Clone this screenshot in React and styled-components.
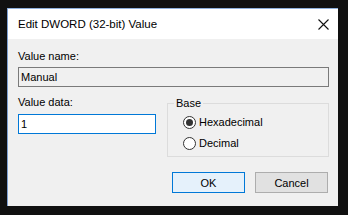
import React from 'react';
import styled, { createGlobalStyle } from 'styled-components';

const Global = createGlobalStyle`
  html, body {
    margin: 0;
    padding: 0;
    background: #101010;
  }
  body {
    font-family: "Liberation Sans", Arial, sans-serif;
    font-size: 11px;
    color: #000;
  }
`;

const Screen = styled.div`
  width: 348px;
  height: 215px;
  padding: 8px 0 0 7px;
  box-sizing: border-box;
`;

const Dialog = styled.div`
  width: 331px;
  height: 198px;
  box-sizing: border-box;
  border-top: 1px solid #8fb0dc;
  border-left: 1px solid #7d9fd2;
  display: flex;
  flex-direction: column;
  background: #f0f0f0;
`;

const TitleBar = styled.div`
  height: 30px;
  background: #fff;
  display: flex;
  align-items: center;
  justify-content: space-between;
  padding: 0 9px 0 10px;
  font-size: 11.5px;
`;

const Body = styled.div`
  padding: 10px 9px 0 10px;
  display: flex;
  flex-direction: column;
`;

const Label = styled.div`
  line-height: 14px;
  margin-top: ${p => p.$top || 0}px;
`;

const TextBox = styled.div`
  height: 20px;
  box-sizing: border-box;
  margin-top: ${p => p.$top || 0}px;
  border: 1px solid ${p => (p.$focused ? '#0078d7' : '#7a7a7a')};
  background: ${p => (p.$disabled ? '#f0f0f0' : '#fff')};
  padding: 0 2px;
  display: flex;
  align-items: center;
`;

const DataRow = styled.div`
  display: grid;
  grid-template-columns: 138px 1fr;
  column-gap: 11px;
`;

const Column = styled.div`
  display: flex;
  flex-direction: column;
`;

const Group = styled.fieldset`
  margin: 9px 0 0;
  padding: 5px 0 6px 15px;
  border: 1px solid #dcdcdc;
  display: flex;
  flex-direction: column;
  gap: 7px;
  min-width: 0;
`;

const Legend = styled.legend`
  padding: 0 2px;
  margin-left: -9px;
  line-height: 14px;
`;

const RadioRow = styled.div`
  display: flex;
  align-items: center;
  gap: 3px;
  height: 14px;
`;

const Circle = styled.span`
  width: 13px;
  height: 13px;
  box-sizing: border-box;
  border-radius: 50%;
  border: 1px solid #333;
  background: #fff;
  display: flex;
  align-items: center;
  justify-content: center;
  &::after {
    content: '';
    width: 7px;
    height: 7px;
    border-radius: 50%;
    background: ${p => (p.$checked ? '#333' : 'transparent')};
  }
`;

const Buttons = styled.div`
  display: flex;
  justify-content: flex-end;
  gap: 10px;
  margin: 15px 1px 0 0;
`;

const Button = styled.div`
  width: 73px;
  height: 21px;
  box-sizing: border-box;
  border: 1px solid ${p => (p.$primary ? '#0078d7' : '#adadad')};
  background: ${p => (p.$primary ? '#e5f1fb' : '#e1e1e1')};
  display: flex;
  align-items: center;
  justify-content: center;
`;

const Close = () => (
  <svg width="11" height="11" viewBox="0 0 11 11">
    <path d="M0.5 0.5 L10.5 10.5 M10.5 0.5 L0.5 10.5" stroke="#111" strokeWidth="1.1" />
  </svg>
);

export default function App() {
  return (
    <Screen>
      <Global />
      <Dialog>
        <TitleBar>
          <span>Edit DWORD (32-bit) Value</span>
          <Close />
        </TitleBar>
        <Body>
          <Label>Value name:</Label>
          <TextBox $top={4} $disabled>Manual</TextBox>
          <DataRow>
            <Column>
              <Label $top={8}>Value data:</Label>
              <TextBox $top={5} $focused>1</TextBox>
            </Column>
            <Group>
              <Legend>Base</Legend>
              <RadioRow>
                <Circle $checked />
                Hexadecimal
              </RadioRow>
              <RadioRow>
                <Circle />
                Decimal
              </RadioRow>
            </Group>
          </DataRow>
          <Buttons>
            <Button $primary>OK</Button>
            <Button>Cancel</Button>
          </Buttons>
        </Body>
      </Dialog>
    </Screen>
  );
}
